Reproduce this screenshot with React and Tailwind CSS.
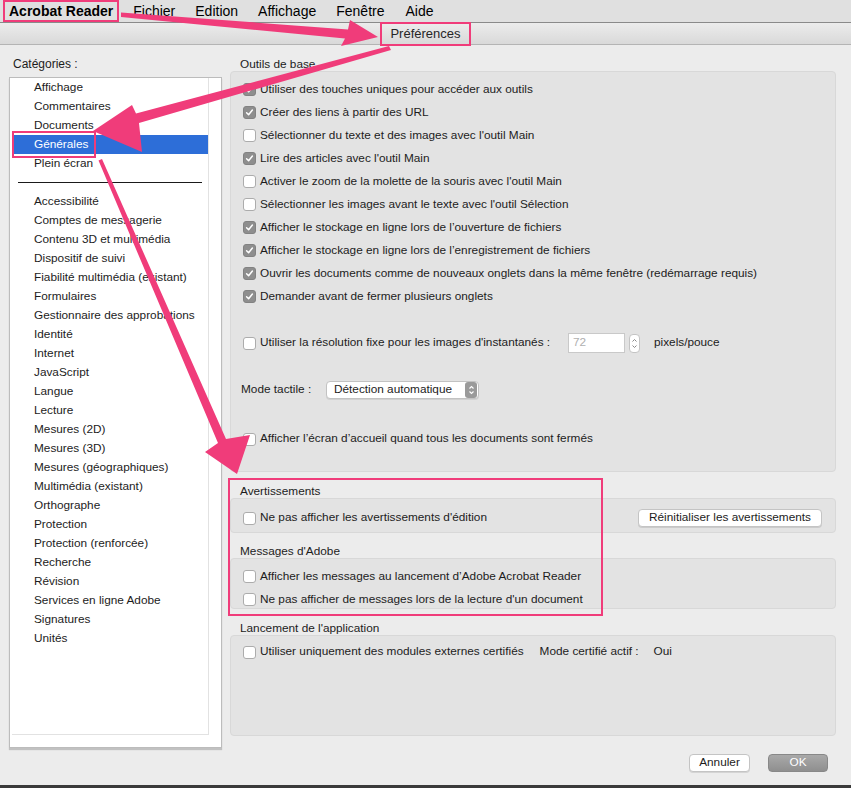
import React from 'react';

const PINK = '#f03c7a';

const categoriesTop = ['Affichage', 'Commentaires', 'Documents', 'Générales', 'Plein écran'];
const categoriesBottom = [
  'Accessibilité',
  'Comptes de messagerie',
  'Contenu 3D et multimédia',
  'Dispositif de suivi',
  'Fiabilité multimédia (existant)',
  'Formulaires',
  'Gestionnaire des approbations',
  'Identité',
  'Internet',
  'JavaScript',
  'Langue',
  'Lecture',
  'Mesures (2D)',
  'Mesures (3D)',
  'Mesures (géographiques)',
  'Multimédia (existant)',
  'Orthographe',
  'Protection',
  'Protection (renforcée)',
  'Recherche',
  'Révision',
  'Services en ligne Adobe',
  'Signatures',
  'Unités',
];

const baseTools = [
  ['Utiliser des touches uniques pour accéder aux outils', true],
  ['Créer des liens à partir des URL', true],
  ["Sélectionner du texte et des images avec l'outil Main", false],
  ["Lire des articles avec l'outil Main", true],
  ["Activer le zoom de la molette de la souris avec l'outil Main", false],
  ["Sélectionner les images avant le texte avec l'outil Sélection", false],
  ['Afficher le stockage en ligne lors de l’ouverture de fichiers', true],
  ['Afficher le stockage en ligne lors de l’enregistrement de fichiers', true],
  ['Ouvrir les documents comme de nouveaux onglets dans la même fenêtre (redémarrage requis)', true],
  ['Demander avant de fermer plusieurs onglets', true],
];

const Checkbox = ({ checked }) => (
  <span
    className={`flex items-center justify-center w-[13px] h-[13px] rounded-[3px] border shrink-0 ${
      checked ? 'bg-[#8e8e8e] border-[#828282]' : 'bg-white border-[#acacac]'
    }`}
  >
    {checked && (
      <svg width="9" height="9" viewBox="0 0 9 9">
        <path d="M1.6 4.8 L3.6 6.8 L7.4 2" fill="none" stroke="white" strokeWidth="1.5" strokeLinecap="round" strokeLinejoin="round" />
      </svg>
    )}
  </span>
);

const CheckRow = ({ label, checked, className }) => (
  <div className={`flex items-center gap-[4px] ${className || 'h-[23px]'}`}>
    <Checkbox checked={checked} />
    <span>{label}</span>
  </div>
);

const GroupLabel = ({ children, className }) => (
  <div className={`h-[14px] leading-[14px] pl-[10px] ${className || ''}`}>{children}</div>
);

const Stepper = () => (
  <span className="flex flex-col items-center justify-center w-[11px] h-[19px] rounded-[4px] border border-[#c4c4c4] bg-white">
    <svg width="7" height="13" viewBox="0 0 7 13">
      <path d="M1.5 4.5 L3.5 2.5 L5.5 4.5 M1.5 8.5 L3.5 10.5 L5.5 8.5" fill="none" stroke="#8a8a8a" strokeWidth="1" />
    </svg>
  </span>
);

export default function App() {
  return (
    <div
      className="relative w-[851px] h-[788px] overflow-hidden bg-[#ececec] text-[11.8px] text-[#1c1c1c]"
      style={{ fontFamily: '"Liberation Sans", Arial, sans-serif' }}
    >
      {/* Menu bar */}
      <div className="flex items-center h-[23px] bg-[#e0e0e0] border-b border-[#8a8a8a] text-[14px] text-black">
        <span className="ml-[3px] h-[22px] flex items-center px-[4px] border-2 border-[#f03c7a] font-bold">
          Acrobat Reader
        </span>
        <div className="flex items-center gap-[20px] ml-[14px]">
          <span>Fichier</span>
          <span>Edition</span>
          <span>Affichage</span>
          <span>Fenêtre</span>
          <span className="ml-[1px]">Aide</span>
        </div>
      </div>

      {/* Window title */}
      <div className="flex justify-center h-[22px] bg-gradient-to-b from-[#ececec] to-[#d9d9d9] border-b border-[#b4b4b4]">
        <span className="h-[24px] -mt-[1px] flex items-center px-[8px] border-2 border-[#f03c7a] text-[13px] text-[#262626]">
          Préférences
        </span>
      </div>

      {/* Body */}
      <div className="flex">
        {/* Categories */}
        <div className="ml-[9px] w-[213px] flex flex-col">
          <div className="mt-[12px] h-[20px] leading-[14px] pl-[4px] text-[12px]">Catégories :</div>
          <div className="h-[671px] border border-[#bcbcbc] bg-white shadow-[0_2px_1px_rgba(0,0,0,0.18)] flex flex-col pr-[12px] pl-[2px] pb-[12px]">
            <div className="flex-1 border-r border-b border-[#e2e2e2]">
              {categoriesTop.map((c) => (
                <div
                  key={c}
                  className={`h-[19px] flex items-center pl-[22px] ${c === 'Générales' ? 'bg-[#2d6ed8] text-white' : ''}`}
                >
                  {c}
                </div>
              ))}
              <div className="h-[19px] flex items-center px-[6px]">
                <div className="w-full h-[1px] bg-[#1a1a1a]" />
              </div>
              {categoriesBottom.map((c) => (
                <div key={c} className="h-[19px] flex items-center pl-[22px]">
                  {c}
                </div>
              ))}
            </div>
          </div>
        </div>

        {/* Settings */}
        <div className="ml-[8px] w-[606px] flex flex-col">
          <GroupLabel className="mt-[12px]">Outils de base</GroupLabel>
          <div className="h-[401px] rounded-[4px] bg-[#e3e3e3] border border-[#d8d8d8] pl-[12px] pt-[6px]">
            {baseTools.map(([label, checked]) => (
              <CheckRow key={label} label={label} checked={checked} />
            ))}
            <div className="flex items-center h-[22px] mt-[24px]">
              <Checkbox checked={false} />
              <span className="ml-[4px] w-[292px]">Utiliser la résolution fixe pour les images d'instantanés :</span>
              <span className="ml-[16px] w-[57px] h-[20px] border border-[#c9c9c9] bg-white flex items-center pl-[4px] text-[#b0b0b0]">
                72
              </span>
              <span className="ml-[4px]">
                <Stepper />
              </span>
              <span className="ml-[14px]">pixels/pouce</span>
            </div>
            <div className="flex items-center h-[20px] mt-[26px]">
              <span className="-ml-[2px] w-[85px]">Mode tactile :</span>
              <span className="w-[153px] h-[18px] flex items-center justify-between rounded-[4px] border border-[#c2c2c2] bg-white shadow-[0_1px_0_rgba(0,0,0,0.08)]">
                <span className="pl-[7px]">Détection automatique</span>
                <span className="w-[12px] h-[16px] mr-[1px] rounded-[3px] bg-[#9a9a9a] flex items-center justify-center">
                  <svg width="7" height="12" viewBox="0 0 7 12">
                    <path d="M1.5 4.5 L3.5 2.5 L5.5 4.5 M1.5 7.5 L3.5 9.5 L5.5 7.5" fill="none" stroke="white" strokeWidth="1.1" />
                  </svg>
                </span>
              </span>
            </div>
            <CheckRow
              className="h-[22px] mt-[28px]"
              label="Afficher l’écran d’accueil quand tous les documents sont fermés"
              checked={false}
            />
          </div>

          <GroupLabel className="mt-[12px]">Avertissements</GroupLabel>
          <div className="h-[35px] rounded-[4px] bg-[#e3e3e3] border border-[#d8d8d8] pl-[12px] pr-[13px] pt-[5px] flex items-center justify-between">
            <CheckRow className="h-[20px]" label="Ne pas afficher les avertissements d'édition" checked={false} />
            <span className="w-[184px] h-[18px] flex items-center justify-center rounded-[4px] border border-[#c4c4c4] bg-white shadow-[0_1px_0_rgba(0,0,0,0.1)]">
              Réinitialiser les avertissements
            </span>
          </div>

          <GroupLabel className="mt-[11px]">Messages d'Adobe</GroupLabel>
          <div className="h-[51px] rounded-[4px] bg-[#e3e3e3] border border-[#d8d8d8] pl-[12px] pt-[6px]">
            <CheckRow label="Afficher les messages au lancement d’Adobe Acrobat Reader" checked={false} />
            <CheckRow label="Ne pas afficher de messages lors de la lecture d'un document" checked={false} />
          </div>

          <GroupLabel className="mt-[12px]">Lancement de l'application</GroupLabel>
          <div className="h-[101px] rounded-[4px] bg-[#e3e3e3] border border-[#d8d8d8] pl-[12px] pt-[5px]">
            <div className="flex items-center h-[22px]">
              <Checkbox checked={false} />
              <span className="ml-[4px]">Utiliser uniquement des modules externes certifiés</span>
              <span className="ml-[16px]">Mode certifié actif :</span>
              <span className="ml-[15px]">Oui</span>
            </div>
          </div>

          <div className="mt-[18px] flex justify-end gap-[18px] pr-[8px]">
            <span className="w-[61px] h-[18px] flex items-center justify-center rounded-[4px] border border-[#c4c4c4] bg-white shadow-[0_1px_0_rgba(0,0,0,0.1)]">
              Annuler
            </span>
            <span className="w-[60px] h-[18px] flex items-center justify-center rounded-[4px] bg-gradient-to-b from-[#a9a9a9] to-[#8f8f8f] border border-[#888] text-white">
              OK
            </span>
          </div>
        </div>
      </div>

      {/* Desktop behind the window */}
      <div className="absolute left-0 right-0 bottom-0 h-[3px] bg-[#3a3a3a]" />

      {/* Annotation overlays */}
      <div className="absolute left-[12px] top-[131px] w-[84px] h-[27px] border-2 border-[#f03c7a]" />
      <div className="absolute left-[228px] top-[478px] w-[375px] h-[138px] border-2 border-[#f03c7a]" />
      <svg className="absolute inset-0 pointer-events-none" width="851" height="788" viewBox="0 0 851 788">
        <polygon fill={PINK} points="121,12.5 348,29.5 350,20 378,37 341,46 345,38.5 121,17" />
        <polygon fill={PINK} points="389,46 136,113.5 132,105 93,131 142,152 139,123 391,50" />
        <polygon fill={PINK} points="98.5,160.5 218,443 205,452 237,474 250,435 226,439 102,159" />
      </svg>
    </div>
  );
}
